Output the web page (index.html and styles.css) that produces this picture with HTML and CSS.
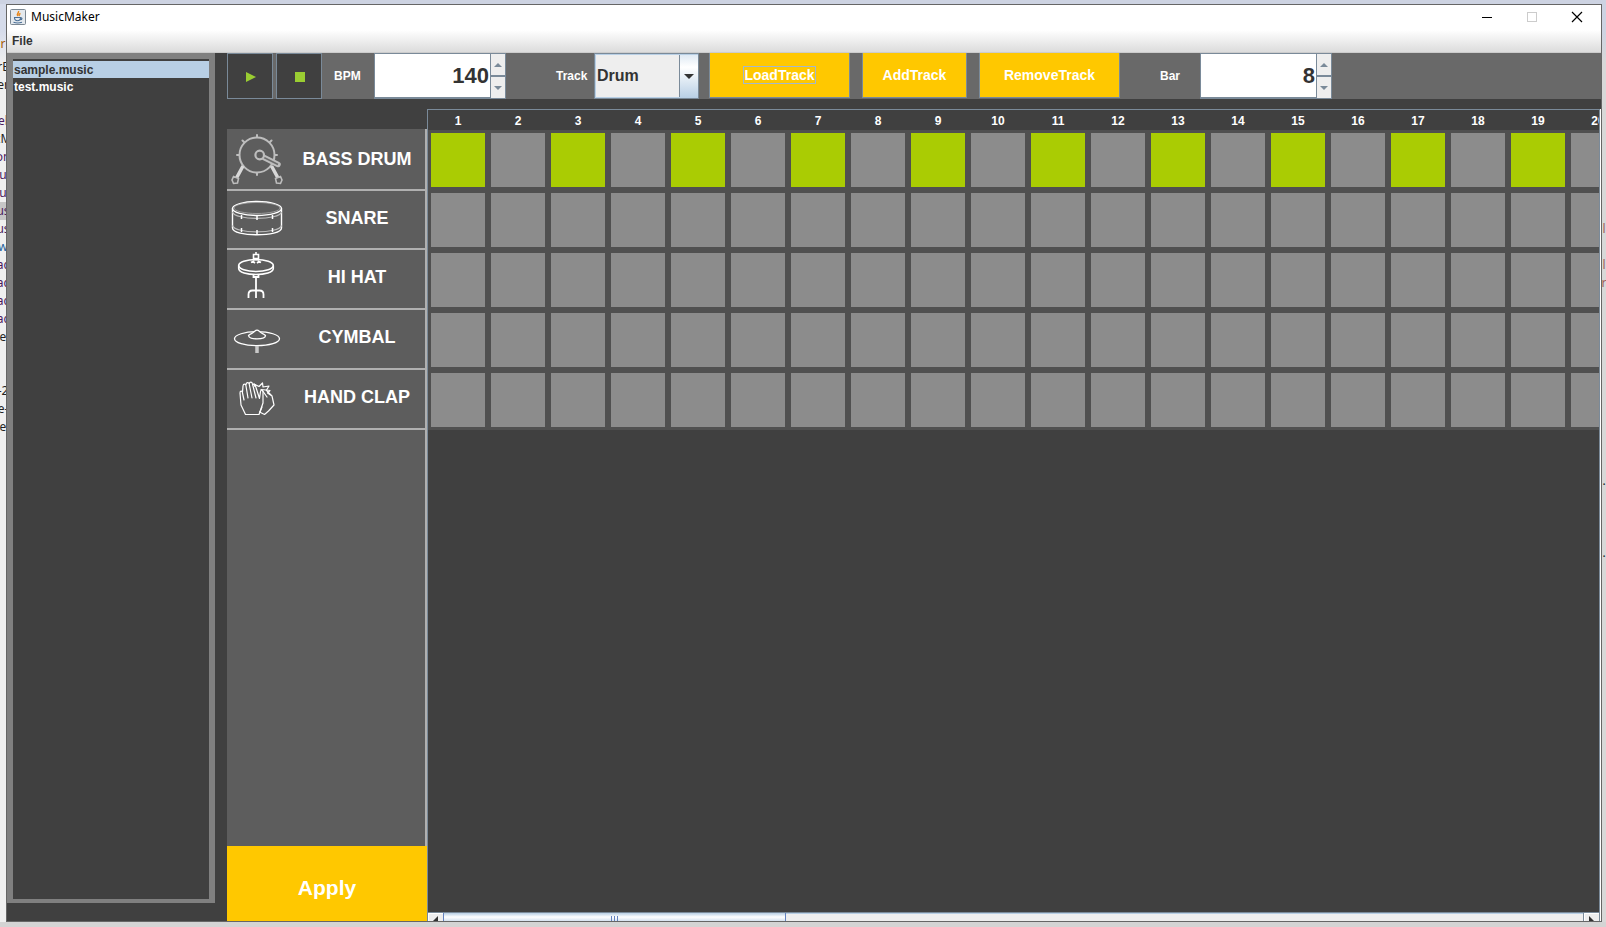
FILE: index.html
```html
<!DOCTYPE html>
<html lang="en">
<head>
<meta charset="utf-8">
<title>MusicMaker</title>
<link rel="stylesheet" href="styles.css">
</head>
<body>
<div class="desktop">
  <div class="gutter gutter-left" aria-hidden="true">
    <div class="gutter-head">r</div>
    <div>rE</div><div>er</div><div></div><div class="plum">el</div><div>cM</div><div class="plum">on</div><div class="plum">u</div><div class="plum">u</div><div class="plum picked">us</div><div class="plum">us</div><div class="blue">w</div><div class="plum">ac</div><div class="plum">ac</div><div class="plum">ac</div><div class="plum">ac</div><div>e</div><div></div><div></div><div>-2</div><div>e-</div><div>e</div>
  </div>

  <div class="window">
    <header class="titlebar">
      <svg class="app-icon" viewBox="0 0 16 16" width="16" height="16">
        <rect x="0.5" y="0.5" width="15" height="15" rx="1" fill="#e4e9ee" stroke="#7b8792"/>
        <path d="M8.500 2c1 1.700-2.500 2.500-.8 5M10.500 4.500c-2 .8-1.800 1.500-.9 2.500" fill="none" stroke="#e8861a" stroke-width="1.400"/>
        <path d="M4.500 8.500h6c0 2.500-.8 3.200-3 3.200s-3-.7-3-3.200zM10.500 9c2-.6 2 1.600-.3 1.800M3.500 13.300c2.500.8 6 .8 8.500 0" fill="none" stroke="#4a6f96" stroke-width="1.100"/>
      </svg>
      <h1 class="app-title">MusicMaker</h1>
      <div class="window-buttons">
        <button aria-label="Minimize"><svg viewBox="0 0 12 12" width="12" height="12"><path d="M1 6.500h10" stroke="#000"/></svg></button>
        <button aria-label="Maximize" disabled><svg viewBox="0 0 12 12" width="12" height="12"><rect x="1.500" y="1.500" width="9" height="9" fill="none" stroke="#ccc"/></svg></button>
        <button aria-label="Close"><svg viewBox="0 0 12 12" width="12" height="12"><path d="M1 1l10 10M11 1L1 11" stroke="#000" stroke-width="1.200"/></svg></button>
      </div>
    </header>
    <nav class="menubar"><button>File</button></nav>

    <div class="content">
      <aside class="files">
        <ul class="file-list">
          <li class="selected">sample.music</li>
          <li>test.music</li>
        </ul>
      </aside>

      <main class="studio">
        <div class="toolbar">
          <button class="transport" aria-label="Play"><svg viewBox="0 0 10 10" width="10" height="10"><path d="M0 0l10 5-10 5z" fill="#9acd32"/></svg></button>
          <button class="transport" aria-label="Stop"><svg viewBox="0 0 10 10" width="10" height="10"><path d="M0 0h10v10H0z" fill="#9acd32"/></svg></button>
          <label class="label-bpm" for="bpm">BPM</label>
          <div class="spinner">
            <input id="bpm" type="text" inputmode="numeric" value="140">
            <div class="spinner-buttons">
              <button aria-label="Increase BPM"><svg viewBox="0 0 8 4" width="8" height="4"><path d="M4 0l4 4H0z" fill="#7a8a99"/></svg></button>
              <button aria-label="Decrease BPM"><svg viewBox="0 0 8 4" width="8" height="4"><path d="M0 0h8L4 4z" fill="#7a8a99"/></svg></button>
            </div>
          </div>
          <label class="label-track" for="track">Track</label>
          <div class="combo">
            <select id="track"><option>Drum</option></select>
            <svg class="combo-arrow" viewBox="0 0 10 5" width="10" height="5"><path d="M0 0h10L5 5z" fill="#333"/></svg>
          </div>
          <button class="action wide"><span class="focused">LoadTrack</span></button>
          <button class="action">AddTrack</button>
          <button class="action wide">RemoveTrack</button>
          <label class="label-bar" for="bar">Bar</label>
          <div class="spinner">
            <input id="bar" type="text" inputmode="numeric" value="8">
            <div class="spinner-buttons">
              <button aria-label="Increase bars"><svg viewBox="0 0 8 4" width="8" height="4"><path d="M4 0l4 4H0z" fill="#7a8a99"/></svg></button>
              <button aria-label="Decrease bars"><svg viewBox="0 0 8 4" width="8" height="4"><path d="M0 0h8L4 4z" fill="#7a8a99"/></svg></button>
            </div>
          </div>
        </div>

        <div class="editor">
          <section class="instruments">
            <ul class="instrument-list">
              <li class="first">
                <svg class="icon" viewBox="0 0 52 58" width="52" height="58" fill="none" stroke="#bdbdbd">
                  <circle cx="26" cy="26" r="17.500" stroke-width="2"/>
                  <path stroke-width="2" stroke-linecap="round" d="M26 8V6M26 44v2M8 26H6M44 26h2M13 13l-1.500-1.500M39 13l1.500-1.500"/>
                  <path stroke="#d8d8d8" stroke-width="3.500" d="M12 37L5.500 49M40.500 37L47 49"/>
                  <path fill="#5d5d5d" stroke-width="1.600" d="M2.500 47.500l5 2-1 4.500-4 .5-1.500-3.500zM49.500 47.500l-5 2 1 4.500 4 .5 1.500-3.500z"/>
                  <path stroke-width="5.500" stroke-linecap="round" d="M33 28.500L47 35.500"/>
                  <path stroke="#6c6c6c" stroke-width="1.600" d="M33 28.500L47 35.500"/>
                  <circle cx="28.700" cy="26" r="4.300" stroke-width="2.200" fill="#5d5d5d"/>
                </svg>
                <span>BASS DRUM</span>
              </li>
              <li class="second">
                <svg class="icon" viewBox="0 0 52 58" width="52" height="58" fill="none" stroke="#fff" stroke-width="1.400">
                  <ellipse cx="26" cy="17.500" rx="24.500" ry="7"/>
                  <ellipse cx="26" cy="17" rx="23" ry="5.500" stroke="#aaa" stroke-width="0.800"/>
                  <path d="M1.500 17.500V37c0 9 49 9 49 0V17.500"/>
                  <path stroke="#bbb" stroke-width="1.100" d="M1.500 21c2 8.500 47 8.500 49 0M1.500 34.500c2 8.500 47 8.500 49 0"/>
                  <path stroke-width="1.500" d="M10.500 24v4M26 25v4M41.500 24v4M10.500 37v4M26 39v4M41.500 37v4"/>
                </svg>
                <span>SNARE</span>
              </li>
              <li>
                <svg class="icon" viewBox="0 0 52 58" width="52" height="58" fill="none" stroke="#fff" stroke-width="1.600">
                  <path d="M25 2v2M22.500 4.500h5v4h-5z"/>
                  <ellipse cx="25" cy="15.500" rx="17.300" ry="6"/>
                  <path d="M7.700 15.500v3c0 8 34.600 8 34.600 0v-3"/>
                  <path stroke-width="1.800" d="M20 12.500l2-1 2 1.500M30 12.500l-2-1-2 1.500M22 9.500h6"/>
                  <path d="M22.500 25v2h5v-2M25 27v21M17.500 48v-3.500q0-4 4-4h7q4 0 4 4V48" stroke-width="1.800"/>
                </svg>
                <span>HI HAT</span>
              </li>
              <li>
                <svg class="icon" viewBox="0 0 52 58" width="52" height="58" fill="none" stroke="#fff" stroke-width="1.300">
                  <ellipse cx="26" cy="28.700" rx="22.500" ry="7"/>
                  <path fill="#5d5d5d" d="M17.500 25.500c2-2.500 5-2 6.500-4.500 1-1 3-1 4 0 1.500 2.500 4.500 2 6.500 4.500 0 4.500-17 4.500-17 0z"/>
                  <path stroke="#c8c8c8" stroke-width="3.500" d="M26 36v7"/>
                </svg>
                <span>CYMBAL</span>
              </li>
              <li>
                <svg class="icon" viewBox="0 0 52 58" width="52" height="58" fill="none" stroke="#fff" stroke-width="1.200" stroke-linejoin="round" stroke-linecap="round">
                  <path d="M14.500 44.500L10 35 9 23c0-2.500 2.500-2.500 2.500 0l1.500 7M11.500 22l.5-6c.3-2.500 2.800-2.500 3 0l2 12M15 15c0-3 3-3 3.300-.5L21 28M18.300 14c.3-2.500 2.700-2.500 3.200 0L25 28M21.500 15c1-1.500 2.500-1 3 1l4 12.500 1-7c.3-2 2.500-1.800 2.500.5V33l-4 11.500H14.500"/>
                  <path d="M28.500 42l5 2.500 4-3.500 5.500-6-2-9-6-6-5-.5M31 20l5 7M31 37l-2 5"/>
                  <path d="M24 16.500l-1-2.500 5 2.500 3.500-3.500.5 4 6-1-2.500 4 3.500.5-2.500 2.500 3 2"/>
                </svg>
                <span>HAND CLAP</span>
              </li>
            </ul>
            <button class="apply">Apply</button>
          </section>

          <section class="sequencer">
            <div class="steps" id="steps"></div>
            <div class="scrollbar" aria-hidden="true">
              <span class="scroll-end"><svg viewBox="0 0 5 6" width="5" height="6"><path d="M5 0v6H0V5z" fill="#333"/></svg></span>
              <span class="scroll-thumb"><i></i><i></i><i></i></span>
              <span class="scroll-track"></span>
              <span class="scroll-end"><svg viewBox="0 0 5 6" width="5" height="6"><path d="M0 0v6h5V5z" fill="#333"/></svg></span>
            </div>
          </section>
        </div>
      </main>
    </div>
  </div>

  <div class="gutter gutter-right" aria-hidden="true">
    <div class="gutter-head"></div>
    <div></div><div></div><div></div><div></div><div></div><div></div><div></div><div></div><div></div><div class="rust">l</div><div></div><div class="rust">l</div><div class="rust">r</div><div></div><div></div><div></div><div></div><div></div><div></div><div></div><div></div><div></div><div></div><div>.</div><div></div><div></div><div></div><div>.</div>
  </div>
</div>
<script src="script.js"></script>
</body>
</html>
```

FILE: styles.css
```css
* { box-sizing: border-box; }

body {
  margin: 0;
  font-family: "Liberation Sans", Arial, sans-serif;
  font-size: 12px;
  font-weight: bold;
  color: #fff;
  overflow: hidden;
}

button, input, select { font: inherit; color: inherit; margin: 0; border-radius: 0; }
button { padding: 0; border: 0; background: none; }
ul { list-style: none; margin: 0; padding: 0; }
svg { display: block; flex: none; }

.desktop {
  display: flex;
  height: 100vh;
  padding: 4px 0 5px;
  background: linear-gradient(#cdd3e2 0, #cdd3e2 30px, #d4d4d4 60px, #d4d4d4 100%);
}

/* Slivers of the editor behind the window */
.gutter {
  flex: none;
  overflow: hidden;
  color: #222;
  font: 12px/18px "Noto Sans", sans-serif;
  white-space: nowrap;
}
.gutter div { height: 18px; display: flex; justify-content: center; }
.gutter-left { width: 6px; background: linear-gradient(#d5dbea 26px, #f0f0f0 60px); }
.gutter-right { width: 4px; background: linear-gradient(#cdd3e2 26px, #d8d8d8 60px); }
.gutter .gutter-head { height: 23px; margin-top: 31px; color: #a65a00; }
.gutter .plum { color: #4b1a5e; }
.gutter .blue { color: #1c5f9c; }
.gutter .rust { color: #a0605a; }
.gutter .picked { background: #c6c6c6; }

.window {
  flex: 1;
  min-width: 0;
  display: flex;
  flex-direction: column;
  border: 1px solid #666;
  background: #404040;
}

.titlebar {
  flex: none;
  display: flex;
  align-items: center;
  height: 25px;
  padding: 0 2px 2px 3px;
  background: #fff;
  color: #000;
}
.app-title {
  margin: 0 0 0 5px;
  font: 12px/16px "Noto Sans", sans-serif;
}
.window-buttons { display: flex; margin-left: auto; }
.window-buttons button {
  width: 45px;
  height: 22px;
  display: flex;
  align-items: center;
  justify-content: center;
}

.menubar {
  flex: none;
  height: 23px;
  padding: 0 5px;
  background: linear-gradient(#fff, #dcdcdc);
  border-bottom: 1px solid #ccc;
  color: #333;
}
.menubar button { line-height: 22px; }

.content { flex: 1; min-height: 0; display: flex; }

.files {
  flex: none;
  width: 208px;
  margin-bottom: 18px;
  padding-top: 2px;
  border: 6px solid #808080;
  border-bottom-width: 4px;
}
.file-list li { height: 17px; padding-left: 1px; line-height: 18px; }
.file-list .selected { background: #b8cfe5; color: #333; }

.studio {
  flex: 1;
  min-width: 0;
  margin-left: 12px;
  display: flex;
  flex-direction: column;
}

.toolbar {
  flex: none;
  display: flex;
  align-items: flex-start;
  height: 46px;
  background: #696969;
}
.toolbar label { line-height: 46px; }
.transport {
  width: 46px;
  height: 46px;
  padding: 2px 0 0 2px;
  display: flex;
  align-items: center;
  justify-content: center;
  border: 1px solid #7a8a99;
  background: #404040;
}
.transport + .transport { margin-left: 3px; }
.label-bpm { width: 40px; margin: 0 0 0 12px; }
.label-track { width: 38px; margin-left: 50px; }
.label-bar { width: 40px; margin-left: 40px; }

.spinner { display: flex; width: 132px; height: 46px; }
.spinner input {
  flex: 1;
  min-width: 0;
  height: 46px;
  padding: 0 1px;
  border: 1px solid #7a8a99;
  border-bottom: 2px solid #7a8a99;
  border-right: 0;
  background: #fff;
  color: #333;
  font-size: 22px;
  text-align: right;
}
.spinner-buttons { display: flex; flex-direction: column; width: 16px; }
.spinner-buttons button {
  flex: 1;
  display: flex;
  align-items: center;
  justify-content: center;
  border: 1px solid #7a8a99;
  background: #eee;
}

.combo { position: relative; width: 105px; height: 46px; }
.combo select {
  width: 100%;
  height: 46px;
  padding: 0 20px 2px 2px;
  border: 1px solid #7a8a99;
  appearance: none;
  background:
    linear-gradient(#7a8a99, #7a8a99) right 18px top / 1px 100% no-repeat,
    linear-gradient(#dde8f3, #fff 30%, #b8cfe5) right / 18px 100% no-repeat,
    #eee;
  box-shadow: inset 1px 1px #b8cfe5, inset 0 -1px #b8cfe5;
  color: #333;
  font-size: 16px;
}
.combo-arrow { position: absolute; right: 5px; top: 21px; }

.action {
  width: 105px;
  height: 45px;
  margin-left: 12px;
  border: 1px solid #7a8a99;
  border-top: 0;
  background: #ffc800;
  font-size: 14px;
}
.action.wide { width: 141px; }
.combo + .action { margin-left: 10px; }
.focused { outline: 1px solid #a3b8cc; }

.editor { flex: 1; min-height: 0; display: flex; padding-top: 10px; }

.instruments {
  flex: none;
  width: 200px;
  padding-top: 20px;
  display: flex;
  flex-direction: column;
}
.instrument-list {
  flex: 1;
  background: #5d5d5d;
  border-right: 2px solid #b0b0b0;
}
.instrument-list li {
  display: flex;
  height: 60px;
  padding-left: 4px;
  border-bottom: 2px solid #b0b0b0;
  font-size: 18px;
  line-height: 54px;
}
.instrument-list .first { height: 62px; line-height: 60px; }
.instrument-list .second { height: 59px; }
.instrument-list span { flex: 1; padding-left: 6px; text-align: center; }
.apply {
  height: 75px;
  padding-top: 8px;
  background: #ffc800;
  font-size: 21px;
}

.sequencer {
  flex: 1;
  min-width: 0;
  margin-right: 1px;
  display: flex;
  flex-direction: column;
  border: 1px solid #7a8a99;
  border-bottom: 0;
  box-shadow: 1px 0 #fff;
}
.steps {
  flex: 1;
  min-height: 0;
  overflow: hidden;
}
.step-numbers, .step-row {
  display: grid;
  grid-auto-flow: column;
  grid-auto-columns: 60px;
  justify-content: start;
  justify-items: center;
}
.step-numbers { height: 20px; line-height: 22px; }
.step-row { height: 60px; align-items: center; width: 1200px; background: #505050; }
.step {
  appearance: none;
  width: 54px;
  height: 54px;
  margin: 0;
  background: #8c8c8c;
}
.step:checked { background: #aacc03; }

.scrollbar {
  flex: none;
  display: flex;
  height: 9px;
  border-top: 1px solid #7a8a99;
  background: #eee;
}
.scroll-end {
  flex: none;
  width: 15px;
  padding: 3px 0 0 5px;
  overflow: hidden;
  box-shadow: inset 1px 1px #fff;
}
.scroll-thumb {
  flex: 3;
  display: flex;
  justify-content: center;
  gap: 1px;
  padding-top: 3px;
  border: 1px solid #6382bf;
  border-width: 0 1px;
  background: linear-gradient(#b8cfe5, #fff 50%, #d5e2f0);
}
.scroll-thumb i { width: 2px; border-left: 1px solid #6382bf; }
.scroll-track { flex: 7; border-right: 1px solid #7a8a99; box-shadow: inset 0 1px #b8cfe5; }
```

FILE: script.js
```js
const STEP_COUNT = 20;
const INSTRUMENTS = ["Bass drum", "Snare", "Hi hat", "Cymbal", "Hand clap"];
const steps = document.getElementById("steps");

const numbers = document.createElement("div");
numbers.className = "step-numbers";
for (let i = 1; i <= STEP_COUNT; i++) {
  const n = document.createElement("span");
  n.textContent = i;
  numbers.append(n);
}
steps.append(numbers);

INSTRUMENTS.forEach((name, row) => {
  const line = document.createElement("div");
  line.className = "step-row";
  for (let i = 1; i <= STEP_COUNT; i++) {
    const box = document.createElement("input");
    box.type = "checkbox";
    box.className = "step";
    box.checked = row === 0 && i % 2 === 1;
    box.setAttribute("aria-label", name + " step " + i);
    line.append(box);
  }
  steps.append(line);
});
```
